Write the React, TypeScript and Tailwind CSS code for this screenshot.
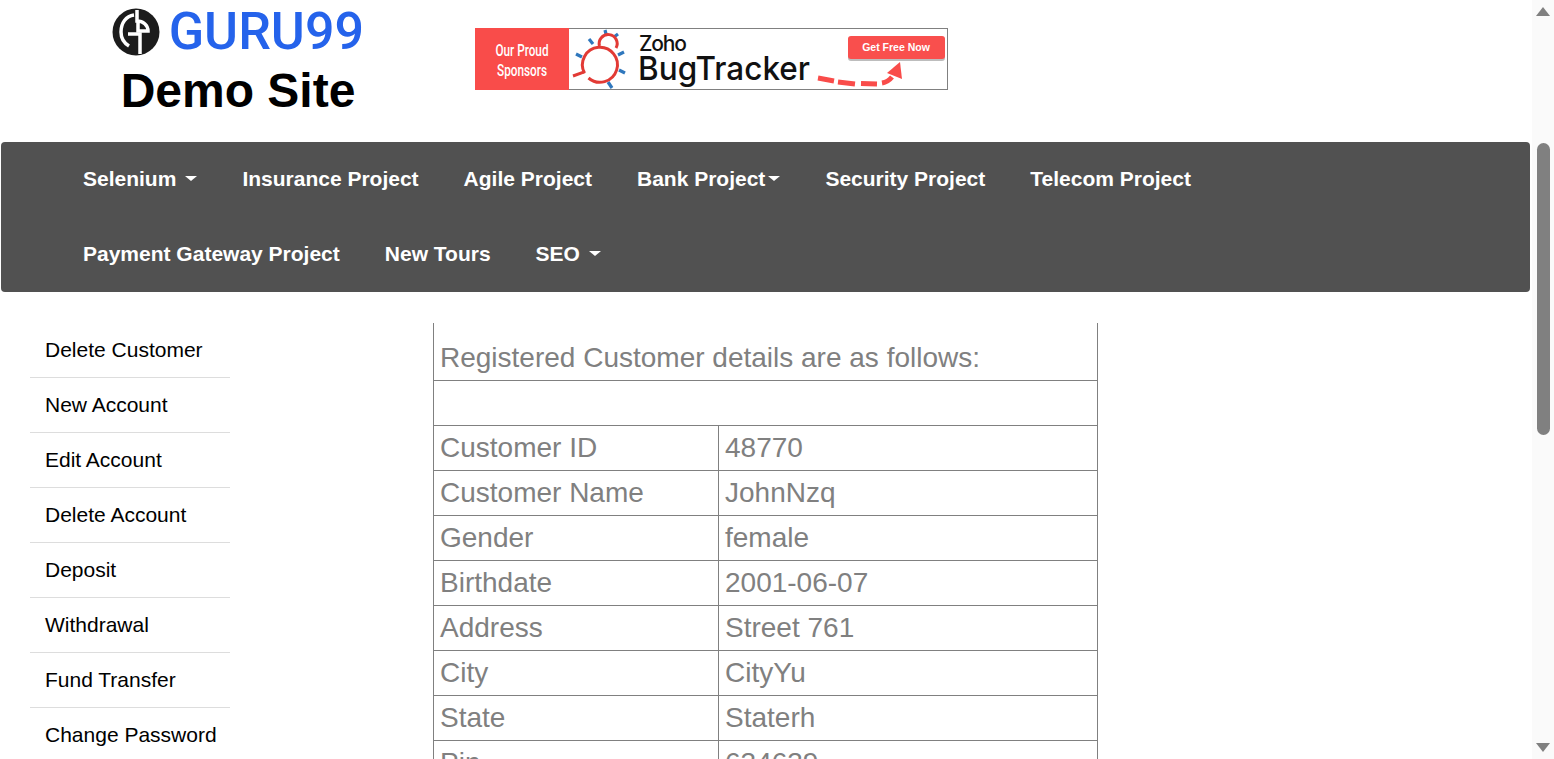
const navRows = [
  [
    { label: 'Selenium', caret: 'spaced' },
    { label: 'Insurance Project' },
    { label: 'Agile Project' },
    { label: 'Bank Project', caret: 'tight' },
    { label: 'Security Project' },
    { label: 'Telecom Project' },
  ],
  [
    { label: 'Payment Gateway Project' },
    { label: 'New Tours' },
    { label: 'SEO', caret: 'spaced' },
  ],
];

const sideLinks = [
  'Delete Customer',
  'New Account',
  'Edit Account',
  'Delete Account',
  'Deposit',
  'Withdrawal',
  'Fund Transfer',
  'Change Password',
];

const customerRows = [
  ['Customer ID', '48770'],
  ['Customer Name', 'JohnNzq'],
  ['Gender', 'female'],
  ['Birthdate', '2001-06-07'],
  ['Address', 'Street 761'],
  ['City', 'CityYu'],
  ['State', 'Staterh'],
  ['Pin', '634639'],
];

function GuruLogo() {
  return (
    <svg width="48" height="48" viewBox="0 0 48 48" className="shrink-0">
      <circle cx="24" cy="24" r="23.5" fill="#1c1c1c" />
      <g fill="none" stroke="#fff" strokeWidth="3.5">
        <path d="M22 7 C14 8 9 15 9 24 C9 30 12 35 17 38" />
        <path d="M16 26 H28 V46" />
        <path d="M25 2 V13 C31 13 36 17 36 23 H26 V13" />
      </g>
    </svg>
  );
}

function SponsorBanner() {
  const legs = [
    [130, 2, 131, 6],
    [139, 9, 143, 6],
    [114, 11, 118, 16],
    [101, 26, 107, 29],
    [143, 27, 149, 24],
    [144, 42, 150, 45],
    [133, 54, 137, 60],
  ];
  return (
    <svg width="473" height="62" viewBox="0 0 473 62" className="block shrink-0">
      <rect x="0.5" y="0.5" width="472" height="61" fill="#fff" stroke="#808080" />
      <rect x="0" y="0" width="94" height="62" fill="#f94c4a" />
      <text x="47" y="28" textAnchor="middle" fill="#fff" fontSize="16" fontWeight="500" fontFamily="Roboto, sans-serif" textLength="53" lengthAdjust="spacingAndGlyphs">Our Proud</text>
      <text x="47" y="48" textAnchor="middle" fill="#fff" fontSize="16" fontWeight="500" fontFamily="Roboto, sans-serif" textLength="50" lengthAdjust="spacingAndGlyphs">Sponsors</text>
      {legs.map(([x1, y1, x2, y2]) => (
        <line key={`${x1}-${y1}`} x1={x1} y1={y1} x2={x2} y2={y2} stroke="#2f77bd" strokeWidth="3.2" />
      ))}
      <path d="M98 48 L110 43.7" fill="none" stroke="#e23a35" strokeWidth="3" />
      <path d="M109.5 45 A17.5 17.5 0 1 1 113.5 50" fill="none" stroke="#e23a35" strokeWidth="3" />
      <path d="M124.5 18 A9 9 0 1 1 141 20" fill="none" stroke="#e23a35" strokeWidth="3" />
      <text x="164" y="23" fontSize="21" fontWeight="500" fontFamily="Inter, sans-serif" fill="#111" textLength="48">Zoho</text>
      <text x="163" y="52" fontSize="33" fontFamily="Inter, sans-serif" fontWeight="500" fill="#111" textLength="172" lengthAdjust="spacingAndGlyphs">BugTracker</text>
      <rect x="373" y="9" width="97" height="24" rx="3" fill="#bdbdbd" />
      <rect x="373" y="8" width="97" height="23" rx="3" fill="#f94f4d" />
      <text x="421" y="23" textAnchor="middle" fontSize="10.5" fontWeight="700" fill="#fff" fontFamily="'Liberation Sans', sans-serif">Get Free Now</text>
      <path d="M343 50 L359 53 M363 54 L380 56 M386 55.5 L402 56 M407 55 Q413 54 417 49" fill="none" stroke="#f94c4a" strokeWidth="5" />
      <path d="M425 34 L412 45 L427 51 Z" fill="#f94c4a" />
    </svg>
  );
}

function Caret({ tight }: { tight: boolean }) {
  return (
    <span className={`inline-block w-0 h-0 border-x-[6px] border-x-transparent border-t-[5px] border-t-white ${tight ? 'ml-[3px]' : 'ml-[9px]'}`} />
  );
}

export default function App() {
  return (
    <div className="flex h-[759px] w-[1554px] overflow-hidden bg-white font-['Liberation_Sans',Arial,sans-serif]">
      <div className="w-[1532px] shrink-0">
        {/* Header */}
        <div className="flex h-[142px] items-start">
          <div className="ml-[112px] flex w-[252px] flex-col items-center pt-[8px]">
            <div className="flex w-full items-center justify-between">
              <GuruLogo />
              <span className="font-['Roboto',sans-serif] text-[52px] leading-[48px] font-medium text-[#2563eb]">GURU99</span>
            </div>
            <h1 className="mt-[7px] text-[48px] leading-[55px] font-bold text-black">Demo Site</h1>
          </div>
          <div className="ml-[111px] mt-[28px]">
            <SponsorBanner />
          </div>
        </div>

        {/* Main nav */}
        <nav className="ml-px mr-[2px] h-[150px] rounded-[4px] bg-[#515151] pl-[82px]">
          {navRows.map((row, i) => (
            <ul key={i} className="flex h-[75px] items-center gap-[45px] pb-[2px]">
              {row.map((item) => (
                <li key={item.label} className="flex items-center text-[21px] font-bold text-white">
                  {item.label}
                  {item.caret && <Caret tight={item.caret === 'tight'} />}
                </li>
              ))}
            </ul>
          ))}
        </nav>

        <div className="mt-[31px] flex">
          {/* Side menu */}
          <ul className="ml-[30px] w-[200px] shrink-0">
            {sideLinks.map((link) => (
              <li key={link} className="flex h-[55px] items-center border-b border-[#dddddd] pl-[15px] text-[21px] text-black">
                {link}
              </li>
            ))}
          </ul>

          {/* Customer details */}
          <table className="ml-[203px] h-fit w-[665px] table-fixed border-collapse text-[28px] text-[#808080]">
            <colgroup>
              <col className="w-[285px]" />
              <col />
            </colgroup>
            <tbody>
              <tr className="h-[57px]">
                <td colSpan={2} className="border-x border-b border-[#808080] px-[6px] pt-[13px] leading-[30px]">
                  Registered Customer details are as follows:
                </td>
              </tr>
              <tr className="h-[45px]">
                <td colSpan={2} className="border border-[#808080]" />
              </tr>
              {customerRows.map(([name, value]) => (
                <tr key={name} className="h-[45px]">
                  <td className="border border-[#808080] px-[6px] leading-[30px]">{name}</td>
                  <td className="border border-[#808080] px-[6px] leading-[30px]">{value}</td>
                </tr>
              ))}
            </tbody>
          </table>
        </div>
      </div>

      {/* Page scrollbar */}
      <div className="flex h-full w-[22px] shrink-0 flex-col items-center bg-[#fafafa]">
        <div className="mt-[7px] h-0 w-0 border-x-[7px] border-b-[9px] border-x-transparent border-b-[#808080]" />
        <div className="mt-[127px] h-[292px] w-[13px] rounded-full bg-[#808080]" />
        <div className="mt-auto mb-[7px] h-0 w-0 border-x-[7px] border-t-[9px] border-x-transparent border-t-[#808080]" />
      </div>
    </div>
  );
}
